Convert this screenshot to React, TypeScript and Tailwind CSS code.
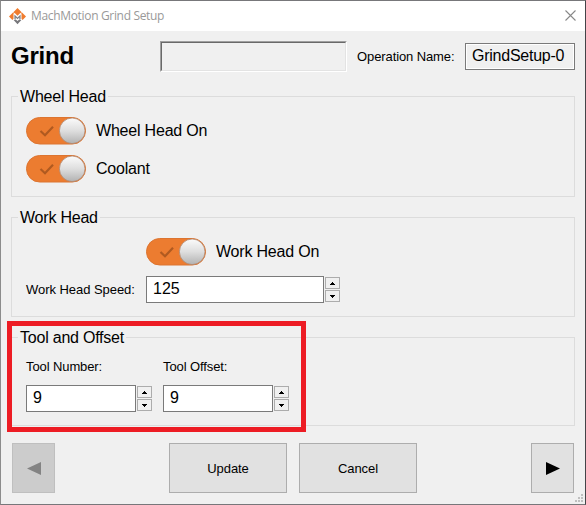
import type { ReactNode } from "react";

function Logo() {
  return (
    <svg width="17" height="17" viewBox="0 0 17 17" className="shrink-0">
      <path
        d="M8.5 0 L12.4 3.9 L11.6 4.6 L13 4.6 L17 8.5 L13.6 11.9 L12.5 10.8 V5.6 L11.3 5 L8.5 7.8 L5.7 5 L4.5 5.6 V10.8 L3.4 11.9 L0 8.5 L4 4.6 L5.4 4.6 L4.6 3.9 Z"
        fill="#f07c2e"
      />
      <path d="M5.4 6.6 L8.5 9.6 L11.6 6.6 V11.2 H10.3 V9.6 L8.5 11.3 L6.7 9.6 V11.2 H5.4 Z" fill="#808084" />
      <path d="M4.6 12 L6.8 11.6 L8.5 13 L10.2 11.6 L12.4 12 L8.5 16.2 Z" fill="#77777b" />
    </svg>
  );
}

function Toggle() {
  return (
    <svg width="60" height="28" viewBox="0 0 60 28" className="shrink-0">
      <defs>
        <linearGradient id="knob" x1="0" y1="0" x2="0" y2="1">
          <stop offset="0" stopColor="#fbfbfb" />
          <stop offset="0.5" stopColor="#dedede" />
          <stop offset="1" stopColor="#b2b2b2" />
        </linearGradient>
      </defs>
      <rect x="0.5" y="0.5" width="59" height="26.5" rx="13.2" fill="#ec7c30" stroke="#dc7430" />
      <path d="M14.5 14 L19 18.3 L27 9.8" fill="none" stroke="#b05a20" strokeWidth="2.2" />
      <circle cx="46.2" cy="13.8" r="12.8" fill="url(#knob)" stroke="#b08870" strokeWidth="0.8" />
    </svg>
  );
}

function ToggleRow({ label }: { label: string }) {
  return (
    <div className="flex h-7 items-center gap-2.5">
      <Toggle />
      <span className="text-[16px] leading-[26px] tracking-[-0.2px]">{label}</span>
    </div>
  );
}

function Arrow({ down }: { down?: boolean }) {
  return (
    <button className="flex h-3 w-[15px] items-center justify-center border border-[#acacac] bg-[#f0f0f0]">
      <svg width="5" height="3" viewBox="0 0 5 3" shapeRendering="crispEdges">
        <path d={down ? "M0 0h5v1h-1v1h-1v1h-1v-1h-1v-1h-1z" : "M2 0h1v1h1v1h1v1h-5v-1h1v-1h1z"} />
      </svg>
    </button>
  );
}

function Spinner({ value, wide }: { value: string; wide?: boolean }) {
  return (
    <div className="flex gap-px">
      <div
        className={`h-[27px] border border-[#7a7a7a] bg-white pl-1.5 text-[16px] leading-[24px] ${wide ? "w-[178px]" : "w-[110px]"}`}
      >
        {value}
      </div>
      <div className="flex flex-col gap-px pt-px">
        <Arrow />
        <Arrow down />
      </div>
    </div>
  );
}

function Group({ title, className, children }: { title: string; className: string; children: ReactNode }) {
  return (
    <section className={`w-[564px] border border-[#dcdcdc] ${className}`}>
      <h2 className="-mt-[11px] ml-1.5 h-5 w-fit bg-[#f0f0f0] px-0.5 text-[16px] leading-[22px] tracking-[-0.22px]">
        {title}
      </h2>
      {children}
    </section>
  );
}

const button = "flex h-[50px] items-center justify-center border";

export default function App() {
  return (
    <div className="relative flex h-[505px] w-[586px] flex-col border border-t-[#77777a] border-r-[#444448] border-b-[#77777a] border-l-[#8c8c8c] bg-[#f0f0f0] font-['Liberation_Sans',Arial,sans-serif] text-black">
      <header className="flex h-[30px] shrink-0 items-center bg-white pr-[9px] pl-2">
        <Logo />
        <span className="ml-[5px] font-['Open_Sans','Noto_Sans',sans-serif] text-[12px] leading-[28px] tracking-[-0.33px] text-[#999]">
          MachMotion Grind Setup
        </span>
        <svg width="11" height="11" viewBox="0 0 11 11" className="mb-px ml-auto">
          <path d="M0.5 0.5 L10.5 10.5 M10.5 0.5 L0.5 10.5" stroke="#888" strokeWidth="1.1" />
        </svg>
      </header>

      <main className="flex flex-col pl-2.5">
        <div className="flex h-[65px] items-start pt-2.5">
          <h1 className="w-[149px] text-[24px] leading-[30px] font-bold tracking-[-0.2px]">Grind</h1>
          <div className="h-[31px] w-[187px] border border-t-[#a0a0a0] border-r-white border-b-white border-l-[#a0a0a0]">
            <div className="h-full border border-t-[#696969] border-r-[#e3e3e3] border-b-[#e3e3e3] border-l-[#696969]" />
          </div>
          <span className="ml-2.5 w-[108px] text-[13px] leading-[31px] tracking-[-0.1px]">Operation Name:</span>
          <div className="mt-0.5 h-[27px] w-[110px] border border-[#7a7a7a] bg-white p-px">
            <div className="h-full bg-[#f0f0f0] pl-[5px] text-[16px] leading-[21px] tracking-[-0.25px]">
              GrindSetup-0
            </div>
          </div>
        </div>

        <Group title="Wheel Head" className="h-[101px]">
          <div className="flex flex-col gap-2.5 pt-[11px] pl-[14px]">
            <ToggleRow label="Wheel Head On" />
            <ToggleRow label="Coolant" />
          </div>
        </Group>

        <Group title="Work Head" className="mt-5 h-[100px]">
          <div className="pt-[11px] pl-[134px]">
            <ToggleRow label="Work Head On" />
          </div>
          <div className="flex pt-2.5 pl-[14px]">
            <span className="w-[120px] text-[13px] leading-[27px] tracking-[-0.05px]">Work Head Speed:</span>
            <Spinner value="125" wide />
          </div>
        </Group>

        <Group title="Tool and Offset" className="mt-5 h-[89px]">
          <div className="flex gap-[11px] pt-[11px] pl-[14px]">
            <label className="flex flex-col text-[13px] leading-[18px] tracking-[-0.1px]">
              <span className="h-[27px]">Tool Number:</span>
              <Spinner value="9" />
            </label>
            <label className="flex flex-col text-[13px] leading-[18px] tracking-[-0.1px]">
              <span className="h-[27px]">Tool Offset:</span>
              <Spinner value="9" />
            </label>
          </div>
        </Group>
      </main>

      <footer className="mt-[17px] flex pl-[11px] text-[13px] tracking-[-0.1px]">
        <button className={`${button} w-[43px] border-[#bfbfbf] bg-[#ccc]`}>
          <svg width="14" height="13" viewBox="0 0 14 13">
            <path d="M0 6.5 L14 0 V13 Z" fill="#838383" />
          </svg>
        </button>
        <button className={`${button} ml-[114px] w-[118px] border-[#adadad] bg-[#e1e1e1]`}>
          <span className="mt-px">Update</span>
        </button>
        <button className={`${button} ml-3 w-[118px] border-[#adadad] bg-[#e1e1e1]`}>
          <span className="mt-px">Cancel</span>
        </button>
        <button className={`${button} ml-[114px] w-[43px] border-[#adadad] bg-[#e1e1e1]`}>
          <svg width="14" height="13" viewBox="0 0 14 13">
            <path d="M14 6.5 L0 0 V13 Z" />
          </svg>
        </button>
      </footer>

      <svg
        width="8"
        height="8"
        viewBox="0 0 8 8"
        shapeRendering="crispEdges"
        className="absolute right-0.5 bottom-0.5"
      >
        <path
          d="M6 0h2v2h-2z M3 3h2v2h-2z M6 3h2v2h-2z M0 6h2v2h-2z M3 6h2v2h-2z M6 6h2v2h-2z"
          fill="#bfbfbf"
        />
      </svg>
      <div className="absolute top-[320px] left-1.5 h-[111px] w-[299px] border-5 border-[#ed1c24]" />
    </div>
  );
}
